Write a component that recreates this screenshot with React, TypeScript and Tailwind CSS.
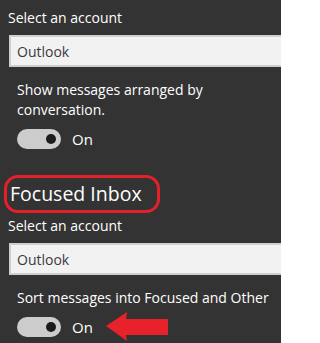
import { useState } from 'react';

interface ToggleProps {
  on: boolean;
  onChange: (v: boolean) => void;
  showArrow?: boolean;
}

function Toggle({ on, onChange, showArrow }: ToggleProps) {
  return (
    <div className="flex items-center h-[20px]">
      <button
        onClick={() => onChange(!on)}
        className="relative w-[44px] h-[20px] rounded-full bg-[#cccccc] flex items-center justify-end pr-[5px] shrink-0"
      >
        <span className="block w-[10px] h-[10px] rounded-full bg-[#1c1c1c]" />
      </button>
      <span className="ml-[11px] text-[15px] text-white leading-[20px]">{on ? 'On' : 'Off'}</span>
      {showArrow && (
        // red annotation arrow pointing at the toggle
        <svg className="ml-[13px] shrink-0" width="63" height="30" viewBox="0 0 63 30">
          <path d="M0 14 L21 0 L20 7 L62 7 L62 23 L20 23 L21 29 Z" fill="#e8212b" />
        </svg>
      )}
    </div>
  );
}

function AccountSelect() {
  return (
    <div className="ml-[9px] h-[32px] bg-[#f2f2f2] border-2 border-r-0 border-[#cfcfcf] flex items-center pl-[6px] text-[14px] text-[#3a3a3a]">
      Outlook
    </div>
  );
}

export default function App() {
  const [conversation, setConversation] = useState(true);
  const [focused, setFocused] = useState(true);

  return (
    <div
      className="w-[281px] h-[343px] bg-[#333333] overflow-hidden text-white"
      style={{ fontFamily: '"Open Sans", sans-serif' }}
    >
      <div className="pt-[8px] pl-[8px] text-[14px] leading-[20px]">Select an account</div>
      <div className="mt-[7px]">
        <AccountSelect />
      </div>
      <div className="pl-[17px] pt-[13px] pr-[60px] text-[14px] leading-[20px]">
        Show messages arranged by conversation.
      </div>
      <div className="pl-[17px] mt-[9px]">
        <Toggle on={conversation} onChange={setConversation} />
      </div>

      <div className="relative mt-[32px] ml-[10px] w-fit">
        <h2 className="text-[19.5px] leading-[26px] font-normal">Focused Inbox</h2>
        <div className="absolute left-[-6px] top-[-6px] w-[156px] h-[38px] border-[3px] border-[#e3212b] rounded-[14px]" />
      </div>
      <div className="pl-[8px] pt-[9px] text-[14px] leading-[20px]">Select an account</div>
      <div className="mt-[7px]">
        <AccountSelect />
      </div>
      <div className="pl-[17px] pt-[13px] text-[14px] leading-[20px] whitespace-nowrap">
        Sort messages into Focused and Other
      </div>
      <div className="pl-[17px] mt-[9px]">
        <Toggle on={focused} onChange={setFocused} showArrow />
      </div>
    </div>
  );
}
